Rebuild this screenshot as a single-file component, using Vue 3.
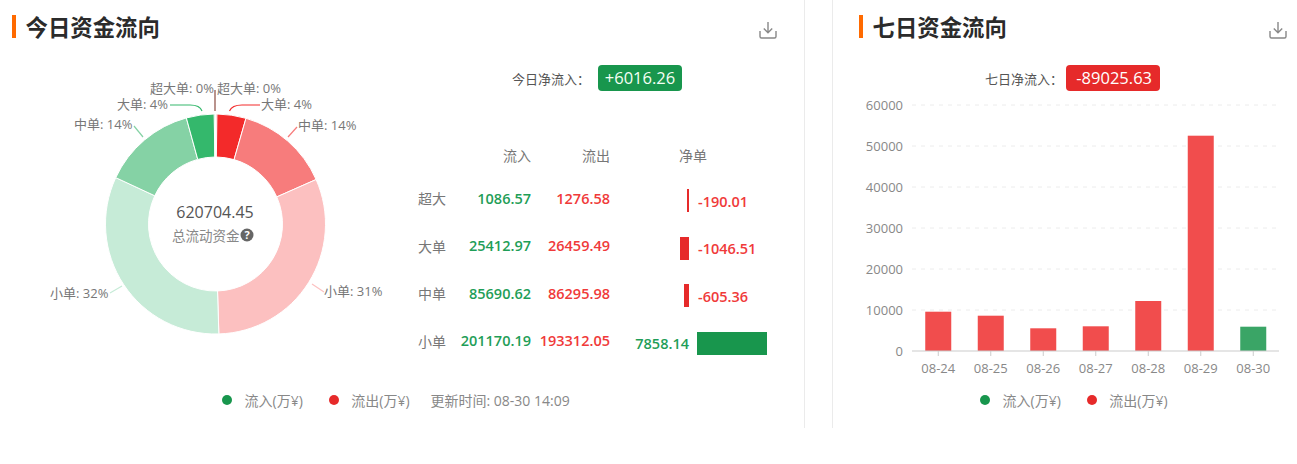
<script setup>
const cx = 215.5, cy = 224, R = 110, r = 67
const total = 620704.45
const slices = [
  { v: 1276.58, c: '#f32a2a' }, { v: 26459.49, c: '#f32a2a' }, { v: 86295.98, c: '#f77c7c' }, { v: 193312.05, c: '#fcc0c0' },
  { v: 201170.19, c: '#c6ebd7' }, { v: 85690.62, c: '#85d2a5' }, { v: 25412.97, c: '#34b86c' }, { v: 1086.57, c: '#34b86c' }
]
const pt = (rad, a) => `${(cx + rad * Math.sin(a)).toFixed(2)} ${(cy - rad * Math.cos(a)).toFixed(2)}`
let acc = 0
const arcs = slices.map((s) => {
  const a0 = (acc / total) * Math.PI * 2
  acc += s.v
  const a1 = (acc / total) * Math.PI * 2
  const large = a1 - a0 > Math.PI ? 1 : 0
  return { c: s.c, d: `M${pt(R, a0)}A${R} ${R} 0 ${large} 1 ${pt(R, a1)}L${pt(r, a1)}A${r} ${r} 0 ${large} 0 ${pt(r, a0)}Z` }
})
const pieLabels = [
  { t: '超大单: 0%', x: 150, y: 88 }, { t: '超大单: 0%', x: 217, y: 88 },
  { t: '大单: 4%', x: 117, y: 104 }, { t: '大单: 4%', x: 261, y: 104 },
  { t: '中单: 14%', x: 74, y: 124 }, { t: '中单: 14%', x: 298, y: 125 },
  { t: '小单: 32%', x: 50, y: 293 }, { t: '小单: 31%', x: 324, y: 291 }
]
const pieLines = [
  { d: 'M215 111V90', c: '#8a4a40' },
  { d: 'M229.5 111Q232 105 242 105H260', c: '#f32a2a' },
  { d: 'M202 111Q200 105 190 105H170', c: '#34b86c' },
  { d: 'M143 137L134 126', c: '#85d2a5' },
  { d: 'M288 137L297 127', c: '#f77c7c' },
  { d: 'M312 284L324 292', c: '#fcc0c0' },
  { d: 'M122 286L110 293', c: '#c6ebd7' }
]
const rows = [
  { n: '超大', i: '1086.57', o: '1276.58', net: '-190.01', w: 1.7 },
  { n: '大单', i: '25412.97', o: '26459.49', net: '-1046.51', w: 9.3 },
  { n: '中单', i: '85690.62', o: '86295.98', net: '-605.36', w: 5.4 },
  { n: '小单', i: '201170.19', o: '193312.05', net: '7858.14', w: 70, up: true }
]
const y0 = 351, x0 = 912, step = 52.5, barW = 26
const ticks = [0, 10000, 20000, 30000, 40000, 50000, 60000].map((v) => ({ v, y: y0 - (v / 60000) * 246 }))
const bars = [
  { d: '08-24', top: 311.7 }, { d: '08-25', top: 315.7 }, { d: '08-26', top: 328.3 }, { d: '08-27', top: 326.3 },
  { d: '08-28', top: 301 }, { d: '08-29', top: 135.7 }, { d: '08-30', top: 326.7, up: true }
].map((b, i) => ({ ...b, cx: x0 + step * (i + 0.5) }))
</script>

<template>
  <div class="page">
    <section class="panel left">
      <header class="head">
        <h2 class="title"><span class="title-text">今日资金流向</span></h2>
        <svg class="dl" width="18" height="18" viewBox="0 0 18 18" fill="none" stroke="#888" stroke-width="1.4">
          <path d="M1 10v5.5A1.5 1.5 0 0 0 2.500 17h13a1.500 1.500 0 0 0 1.500-1.500V10" />
          <path d="M9 1v10.500M4.800 7.500L9 11.700l4.200-4.200" />
        </svg>
      </header>
      <div class="body">
        <svg class="pie" width="418" height="325" viewBox="0 65 418 325">
          <path v-for="(a, i) in arcs" :key="i" :d="a.d" :fill="a.c" stroke="#fff" stroke-width="1" />
          <path v-for="(l, i) in pieLines" :key="'l' + i" :d="l.d" :stroke="l.c" fill="none" stroke-width="1.200" />
          <text v-for="(l, i) in pieLabels" :key="'t' + i" :x="l.x" :y="l.y + 5" class="pie-label">{{ l.t }}</text>
          <text x="215" y="218" text-anchor="middle" class="pie-total">620704.45</text>
          <text x="172" y="241" class="pie-sub">总流动资金</text>
          <circle cx="247" cy="235" r="6.500" fill="#666" />
          <text x="247" y="239" text-anchor="middle" class="pie-q">?</text>
        </svg>
        <div class="side">
          <div class="net net-today">
            <span class="net-label">今日净流入：</span>
            <span class="pill green">+6016.26</span>
          </div>
          <div class="tr th">
            <span></span>
            <span class="num">流入</span>
            <span class="num">流出</span>
            <span class="th-net">净单</span>
          </div>
          <div v-for="row in rows" :key="row.n" class="tr">
            <span class="name">{{ row.n }}</span>
            <span class="num val g">{{ row.i }}</span>
            <span class="num val r">{{ row.o }}</span>
            <span class="net-l">
              <span v-if="row.up" class="net-val g">{{ row.net }}</span>
              <span v-else class="bar bg-r" :style="{ width: row.w + 'px' }"></span>
            </span>
            <span></span>
            <span class="net-r">
              <span v-if="row.up" class="bar bg-g" :style="{ width: row.w + 'px' }"></span>
              <span v-else class="net-val neg r">{{ row.net }}</span>
            </span>
          </div>
        </div>
      </div>
      <footer class="legend legend-left">
        <span class="lg"><i class="dot bg-g"></i>流入(万¥)</span>
        <span class="lg"><i class="dot bg-r"></i>流出(万¥)</span>
        <span class="time">更新时间: 08-30 14:09</span>
      </footer>
    </section>

    <section class="panel right">
      <header class="head">
        <h2 class="title"><span class="title-text">七日资金流向</span></h2>
        <svg class="dl" width="18" height="18" viewBox="0 0 18 18" fill="none" stroke="#888" stroke-width="1.4">
          <path d="M1 10v5.5A1.5 1.5 0 0 0 2.500 17h13a1.500 1.500 0 0 0 1.500-1.500V10" />
          <path d="M9 1v10.500M4.800 7.500L9 11.700l4.200-4.200" />
        </svg>
      </header>
      <div class="net net-week">
        <span class="net-label">七日净流入：</span>
        <span class="pill red">-89025.63</span>
      </div>
      <svg class="bars" width="464" height="290" viewBox="833 91 464 290">
        <template v-for="t in ticks" :key="t.v">
          <line v-if="t.v" x1="912" x2="1280" :y1="t.y" :y2="t.y" stroke="#ececec" stroke-dasharray="4 5" />
          <text x="903" :y="t.y + 4.5" text-anchor="end" class="axis">{{ t.v }}</text>
        </template>
        <template v-for="b in bars" :key="b.d">
          <rect :x="b.cx - barW / 2" :y="b.top" :width="barW" :height="y0 - b.top" :fill="b.up ? '#3aa566' : '#f14d4d'" />
          <line :x1="b.cx" :x2="b.cx" :y1="y0" :y2="y0 + 5" stroke="#ccc" />
          <text :x="b.cx" y="373" text-anchor="middle" class="axis">{{ b.d }}</text>
        </template>
        <line x1="912" x2="1279" :y1="y0" :y2="y0" stroke="#ccc" stroke-width="1.200" />
      </svg>
      <footer class="legend legend-right">
        <span class="lg"><i class="dot bg-g"></i>流入(万¥)</span>
        <span class="lg"><i class="dot bg-r"></i>流出(万¥)</span>
      </footer>
    </section>
  </div>
</template>

<style>
html, body { background: #fff; }
</style>

<style scoped>
.page {
  display: flex;
  gap: 27px;
  width: 1297px;
  height: 428px;
  font-family: "Open Sans", "Noto Sans CJK SC", sans-serif;
  color: #666;
  background: #fff;
}
.panel { padding-top: 15px; box-sizing: border-box; }
.left { width: 805px; border-right: 1px solid #ebebeb; }
.right { flex: 1; border-left: 1px solid #ebebeb; }
.head { display: flex; align-items: center; justify-content: space-between; height: 23px; }
.left .head { padding: 0 27px 0 12px; }
.right .head { padding: 0 10px 0 26px; }
.title {
  margin: 0;
  padding-left: 9.500px;
  border-left: 4px solid #ff6a00;
  font-size: 22.400px;
  line-height: 23px;
  font-weight: 700;
  color: #2b2b2b;
}
.title-text { display: block; padding-top: 1px; height: 22px; line-height: 24px; }
.dl { margin-top: 6px; }
.body { display: flex; margin-top: 27px; height: 325px; }
.pie { flex: none; }
.pie-label { font-size: 13px; fill: #777; }
.pie-total { font-size: 16px; fill: #555; }
.pie-sub { font-size: 13.500px; fill: #888; }
.pie-q { font-size: 11px; font-weight: 700; fill: #fff; }
.axis { font-size: 13px; fill: #888; }
.side { flex: 1; }
.net { display: flex; align-items: center; height: 26px; }
.net-today { padding-left: 94px; }
.net-week { margin-top: 27px; padding-left: 152px; }
.net-label { width: 86px; font-size: 13px; color: #555; white-space: nowrap; }
.net-week .net-label { width: 81px; }
.pill {
  height: 26px;
  line-height: 26px;
  border-radius: 4px;
  color: #f4fff4;
  font-size: 16.500px;
  box-sizing: border-box;
}
.green { width: 84px; background: #18964d; text-align: center; }
.red { width: 94px; background: #e62a2a; text-align: right; padding-right: 8px; color: #fff; }
.tr {
  display: grid;
  grid-template-columns: 40px 73px 79px 79px 8px 80px;
  align-items: center;
  height: 47.500px;
  font-size: 14px;
}
.th { height: 18px; margin-top: 54px; margin-bottom: 13.750px; color: #777; }
.th-net { grid-column: 4 / 7; padding-left: 69px; }
.name { color: #777; padding-bottom: 5px; }
.num { text-align: right; }
.val { font-size: 14.500px; font-weight: 600; padding-bottom: 5px; white-space: nowrap; }
.net-l { display: flex; justify-content: flex-end; align-items: center; }
.net-r { display: flex; align-items: center; }
.net-val { font-size: 14.500px; font-weight: 600; padding-top: 1px; white-space: nowrap; }
.neg { padding-left: 1px; }
.bar { display: block; height: 23px; flex: none; }
.g { color: #1f9e58; }
.r { color: #f03a3a; }
.bg-g { background: #18964d; }
.bg-r { background: #e62a2a; }
.bars { display: block; }
.legend {
  display: flex;
  align-items: center;
  height: 18px;
  font-size: 14px;
  color: #888;
  white-space: nowrap;
}
.legend-left { margin-top: 1px; padding-left: 222px; gap: 26px; }
.legend-right { margin-top: 10px; padding-left: 147px; gap: 26px; }
.lg { display: flex; align-items: center; gap: 12.500px; }
.dot { width: 10px; height: 10px; border-radius: 50%; flex: none; }
.time { margin-left: -5px; }
</style>
